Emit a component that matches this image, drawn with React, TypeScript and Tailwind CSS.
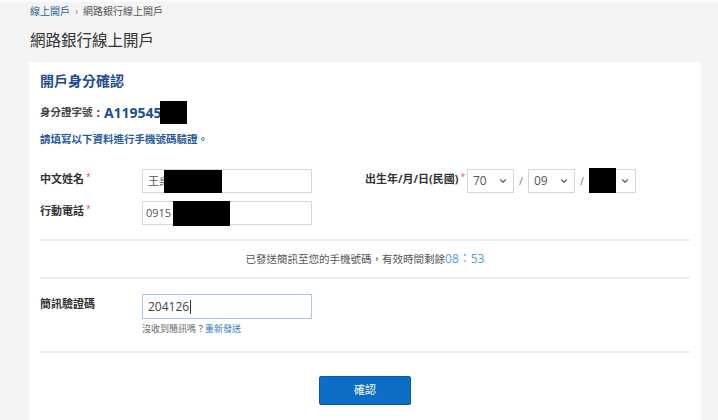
import { ChevronDown } from "lucide-react";

const font = "font-['Open_Sans','Noto_Sans_CJK_TC',sans-serif]";

function Redact({ className }: { className: string }) {
  return <span aria-hidden className={`inline-block bg-black ${className}`} />;
}

function FieldLabel({ text, required = true }: { text: string; required?: boolean }) {
  return (
    <div className="w-[102px] shrink-0 pt-[2px] text-[11px] font-bold leading-[16px] text-[#333]">
      {text}
      {required ? (
        <span className="relative -top-[3px] ml-[2px] text-[9px] font-normal text-[#e2574c]">*</span>
      ) : null}
    </div>
  );
}

function DateSelect({ value, hidden }: { value: string; hidden?: boolean }) {
  return (
    <div className="relative flex h-[24px] w-[47px] items-center border border-[#d6d6d6] bg-white pl-[5px] pr-[5px] text-[12px] text-[#555]">
      {hidden ? (
        <Redact className="absolute -left-px -top-[2px] h-[25px] w-[27px]" />
      ) : (
        <span>{value}</span>
      )}
      <ChevronDown size={10} strokeWidth={3} className="ml-auto text-[#666]" />
    </div>
  );
}

export default function App() {
  return (
    <div className={`${font} min-h-screen overflow-hidden border-t-2 border-[#fbfbfb] bg-[#f4f4f4] pl-[29px] pr-[17px] pt-[2px]`}>
      <nav className="ml-px flex h-[14px] items-center gap-[5px] text-[10px] leading-[14px] text-[#555]">
        <span className="text-[#2f5d9c]">線上開戶</span>
        <span className="text-[#888]">›</span>
        <span>網路銀行線上開戶</span>
      </nav>

      <h1 className="ml-px mt-[12px] text-[15.5px] leading-[20px] text-[#333]">網路銀行線上開戶</h1>

      <main className="mt-[12px] bg-white px-[11px] pb-[20px] pt-[9px]">
        <h2 className="text-[14px] font-bold leading-[20px] text-[#1f4d8e]">開戶身分確認</h2>

        <div className="mt-[10px] flex h-[23px] items-center">
          <span className="text-[10.5px] font-bold text-[#444]">身分證字號</span>
          <span className="mx-[4px] text-[12px] font-bold text-[#444]">:</span>
          <span className="text-[14px] font-bold text-[#1f4d8e]">A119545</span>
          <Redact className="-ml-[2px] h-[23px] w-[27px]" />
        </div>

        <p className="mt-[7px] text-[10.5px] font-bold leading-[16px] text-[#2a5b9d]">
          請填寫以下資料進行手機號碼驗證。
        </p>

        <div className="mt-[22px] flex flex-col gap-[8px]">
          <div className="flex">
            <div className="flex w-[325px] shrink-0">
              <FieldLabel text="中文姓名" />
              <div className="flex h-[24px] w-[170px] items-center border border-[#d6d6d6] pl-[5px] text-[11px] text-[#555]">
                <span>王桌</span>
                <Redact className="-ml-[6px] mt-[1px] h-[23px] w-[58px]" />
              </div>
            </div>
            <div className="flex">
              <FieldLabel text="出生年/月/日(民國)" />
              <div className="flex items-center">
                <DateSelect value="70" />
                <span className="w-[14px] text-center text-[11px] text-[#777]">/</span>
                <DateSelect value="09" />
                <span className="w-[14px] text-center text-[11px] text-[#777]">/</span>
                <DateSelect value="" hidden />
              </div>
            </div>
          </div>

          <div className="flex">
            <FieldLabel text="行動電話" />
            <div className="flex h-[24px] w-[170px] items-center border border-[#d6d6d6] pl-[3px] text-[11px] text-[#555]">
              <span>0915</span>
              <Redact className="ml-[2px] h-[25px] w-[57px]" />
            </div>
          </div>
        </div>

        <div className="mt-[14px] border-t-2 border-[#eeeeee]" />
        <p className="py-[10px] text-center text-[10.5px] leading-[16px] text-[#555]">
          已發送簡訊至您的手機號碼，有效時間剩餘<span className="text-[12px] text-[#4d9fd6]">08：53</span>
        </p>
        <div className="border-t-2 border-[#eeeeee]" />

        <div className="mt-[15px] flex">
          <FieldLabel text="簡訊驗證碼" required={false} />
          <div>
            <div className="flex h-[25px] w-[170px] items-center border border-[#a9c7e6] pl-[5px] text-[12px] text-[#444]">
              <span>204126</span>
              <span className="ml-px h-[14px] w-px bg-[#333]" />
            </div>
            <p className="mt-[4px] text-[9px] leading-[12px] text-[#666]">
              沒收到簡訊嗎？<span className="text-[#2b79c7]">重新發送</span>
            </p>
          </div>
        </div>

        <div className="mt-[16px] border-t-2 border-[#eeeeee]" />

        <div className="mt-[23px] flex justify-center">
          <button
            type="button"
            className="h-[29px] w-[92px] rounded-[2px] border border-[#0b5aa3] bg-[#0c6ec4] text-[11px] text-white"
          >
            確認
          </button>
        </div>
      </main>
    </div>
  );
}
